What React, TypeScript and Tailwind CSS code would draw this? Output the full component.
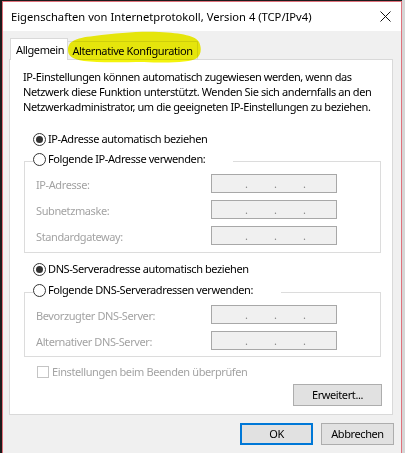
import React from "react";

const font = { fontFamily: '"Noto Sans", "Liberation Sans", sans-serif' };

function Radio({ checked, label }: { checked?: boolean; label: string }) {
  return (
    <div className="flex items-center h-[16px] gap-[2px]">
      <span className="w-[13px] h-[13px] rounded-full border border-[#333333] bg-white flex items-center justify-center shrink-0">
        {checked && <span className="w-[7px] h-[7px] rounded-full bg-[#333333]" />}
      </span>
      <span className="text-[11px] tracking-[-0.4px] leading-[16px] text-black whitespace-nowrap">{label}</span>
    </div>
  );
}

function IpRow({ label }: { label: string }) {
  return (
    <div className="flex items-center h-[19px]">
      <span className="w-[175px] text-[11px] tracking-[-0.4px] leading-[16px] text-[#a3a3a3] pt-[3px] whitespace-nowrap">{label}</span>
      <div className="w-[126px] h-[19px] border border-[#a8a8a8] bg-[#f0f0f0] flex items-end pb-[2px] pl-[33px] gap-[27px] text-[11px] leading-[12px] text-[#8a8a8a]">
        <span className="w-[2px]">.</span>
        <span className="w-[2px]">.</span>
        <span className="w-[2px]">.</span>
      </div>
    </div>
  );
}

export default function App() {
  return (
    <div className="w-[405px] h-[453px] bg-[#1b1b1b] flex overflow-hidden" style={font}>
      <div className="ml-[2px] mt-[1px] w-[400px] h-[452px] border-l border-t border-r border-[#e0727c] bg-[#f0f0f0] flex flex-col shrink-0">
        {/* Title bar */}
        <div className="h-[29px] bg-white flex items-center justify-between pl-[8px] pr-[10px] shrink-0">
          <span className="text-[11.2px] leading-[16px] text-black whitespace-nowrap">
            Eigenschaften von Internetprotokoll, Version 4 (TCP/IPv4)
          </span>
          <svg width="11" height="11" viewBox="0 0 11 11">
            <path d="M0.5 0.5 L10.5 10.5 M10.5 0.5 L0.5 10.5" stroke="#111" strokeWidth="1" />
          </svg>
        </div>

        {/* Body */}
        <div className="flex flex-col pt-[7px] pl-[6px] pr-[8px]">
          {/* Tabs */}
          <div className="relative h-[21px] flex items-end">
            <div className="ml-[1px] w-[58px] h-[22px] mb-[-1px] relative z-10 bg-white border-t border-l border-r border-[#d9d9d9] flex items-center pl-[5px]">
              <span className="text-[11px] tracking-[-0.4px] leading-[16px] text-black whitespace-nowrap">Allgemein</span>
            </div>
            <div className="w-[130px] h-[18px] border-t border-r border-[#d9d9d9] bg-[#f0f0f0] flex items-center justify-center">
              <span className="text-[11px] tracking-[-0.4px] leading-[16px] text-black whitespace-nowrap">Alternative Konfiguration</span>
            </div>
            <svg
              className="absolute left-[55px] top-[-8px] z-20 mix-blend-multiply pointer-events-none"
              width="145"
              height="40"
              viewBox="0 0 145 40"
            >
              <path
                d="M4 20 C4 12 10 8 30 6 C55 3 75 1 95 2 C118 3 132 6 135 12 C138 18 137 25 133 28 C126 33 100 33 80 32 C60 32 35 33 20 31 C8 29 4 26 4 20 Z"
                fill="#f4f40c"
                style={{ filter: "blur(0.6px)" }}
              />
            </svg>
          </div>

          {/* Panel */}
          <div className="w-[384px] border border-[#d9d9d9] bg-white flex flex-col pl-[13px] pt-[9px]">
            <p className="text-[11px] tracking-[-0.4px] leading-[15px] text-black whitespace-nowrap">
              IP-Einstellungen können automatisch zugewiesen werden, wenn das
              <br />
              Netzwerk diese Funktion unterstützt. Wenden Sie sich andernfalls an den
              <br />
              Netzwerkadministrator, um die geeigneten IP-Einstellungen zu beziehen.
            </p>

            <div className="ml-[10px] mt-[17px]">
              <Radio checked label="IP-Adresse automatisch beziehen" />
            </div>

            <fieldset className="ml-[1px] mt-[4px] w-[357px] border border-[#dcdcdc]">
              <legend className="ml-[8px] pr-[28px] pb-[4px]">
                <Radio label="Folgende IP-Adresse verwenden:" />
              </legend>
              <div className="pl-[11px] pt-[3px] pb-[7px] flex flex-col gap-[7px]">
                <IpRow label="IP-Adresse:" />
                <IpRow label="Subnetzmaske:" />
                <IpRow label="Standardgateway:" />
              </div>
            </fieldset>

            <div className="ml-[10px] mt-[8px]">
              <Radio checked label="DNS-Serveradresse automatisch beziehen" />
            </div>

            <fieldset className="ml-[1px] mt-[5px] w-[357px] border border-[#dcdcdc]">
              <legend className="ml-[8px] pr-[28px] pb-[4px]">
                <Radio label="Folgende DNS-Serveradressen verwenden:" />
              </legend>
              <div className="pl-[11px] pt-[3px] pb-[6px] flex flex-col gap-[7px]">
                <IpRow label="Bevorzugter DNS-Server:" />
                <IpRow label="Alternativer DNS-Server:" />
              </div>
            </fieldset>

            <div className="ml-[14px] mt-[7px] flex items-center h-[16px] gap-[3px]">
              <span className="w-[12px] h-[12px] border border-[#c4c4c4] bg-white shrink-0" />
              <span className="text-[11px] tracking-[-0.4px] leading-[16px] text-[#a3a3a3] whitespace-nowrap">
                Einstellungen beim Beenden überprüfen
              </span>
            </div>

            <div className="self-end mr-[10px] mt-[4px] mb-[8px] w-[89px] h-[22px] border border-[#adadad] bg-[#e1e1e1] flex items-center justify-center">
              <span className="text-[11px] tracking-[-0.4px] leading-[16px] text-black">Erweitert...</span>
            </div>
          </div>

          {/* Buttons */}
          <div className="mt-[8px] mr-[-1px] flex justify-end gap-[8px]">
            <div className="w-[73px] h-[22px] border-2 border-[#0078d7] bg-[#e1e1e1] flex items-center justify-center">
              <span className="text-[11px] tracking-[-0.4px] leading-[16px] text-black">OK</span>
            </div>
            <div className="w-[73px] h-[22px] border border-[#adadad] bg-[#e1e1e1] flex items-center justify-center">
              <span className="text-[11px] tracking-[-0.4px] leading-[16px] text-black">Abbrechen</span>
            </div>
          </div>
        </div>
      </div>
      <div className="flex-1 bg-[#d6d6d6]" />
    </div>
  );
}
